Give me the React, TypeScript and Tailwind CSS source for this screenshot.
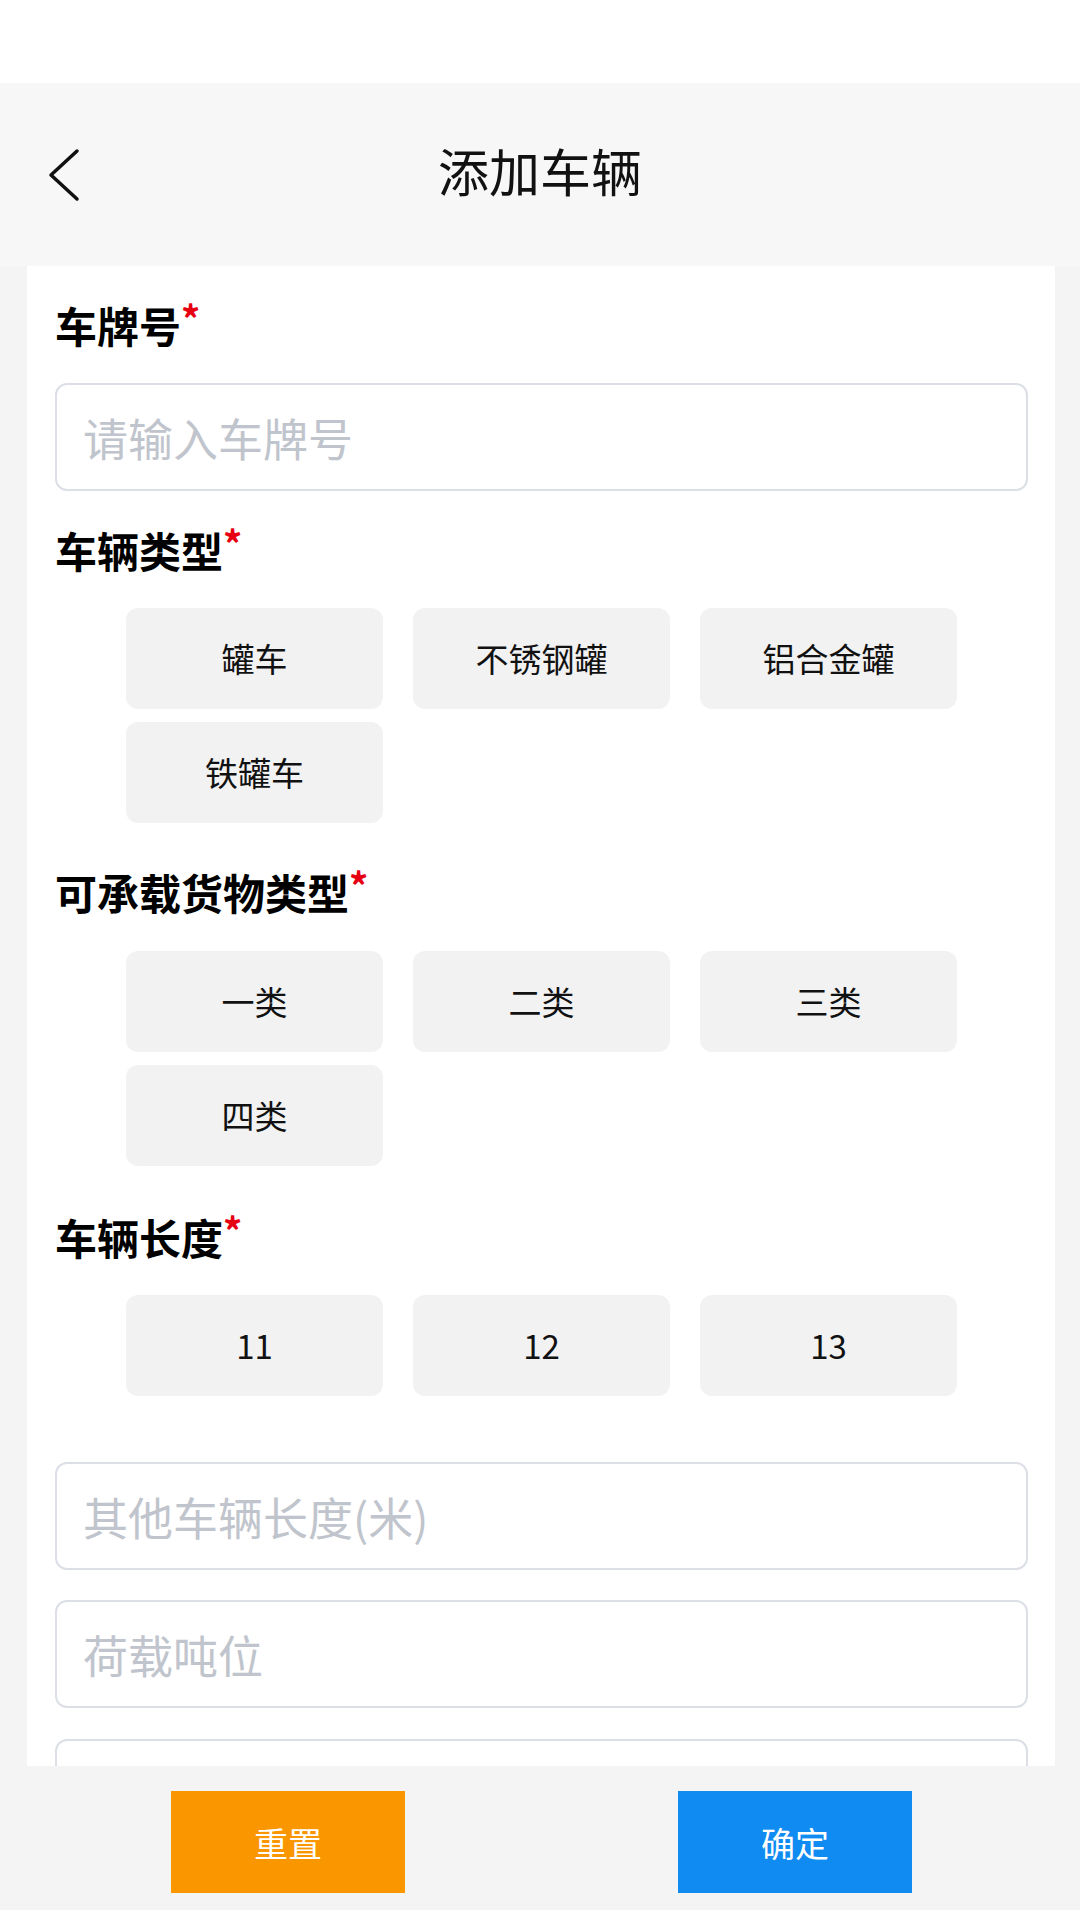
import { useState } from "react";

const vehicleTypes = ["罐车", "不锈钢罐", "铝合金罐", "铁罐车"];
const cargoTypes = ["一类", "二类", "三类", "四类"];
const lengths = ["11", "12", "13"];

function Label({ text, className = "" }: { text: string; className?: string }) {
  return (
    <div className={`flex h-[44px] items-start ${className}`}>
      <span className="text-[42px] font-bold leading-[44px] text-black">{text}</span>
      <span className="mt-[-4px] text-[38px] font-bold leading-none text-[#e60012]">*</span>
    </div>
  );
}

function Field({ placeholder, className = "" }: { placeholder: string; className?: string }) {
  return (
    <div className={`h-[108px] rounded-[12px] border-2 border-[#dcdfe6] px-[26px] ${className}`}>
      <input
        className="h-full w-full bg-transparent text-[45px] text-[#333] outline-none placeholder:text-[#c0c4cc]"
        placeholder={placeholder}
      />
    </div>
  );
}

function Options({ items, className = "" }: { items: string[]; className?: string }) {
  const [picked, setPicked] = useState<string | null>(null);
  return (
    <div className={`mx-auto grid w-[831px] grid-cols-3 gap-x-[30px] gap-y-[13px] ${className}`}>
      {items.map((item) => (
        <button
          key={item}
          onClick={() => setPicked(item)}
          className={`flex h-[101px] items-center justify-center rounded-[12px] text-[33px] ${
            picked === item ? "bg-[#e6f2fe] text-[#1089f0]" : "bg-[#f2f2f2] text-[#111]"
          }`}
        >
          {item}
        </button>
      ))}
    </div>
  );
}

export default function App() {
  return (
    <div
      className="flex h-[1920px] w-[1080px] flex-col overflow-hidden bg-[#f4f4f4]"
      style={{ fontFamily: '"Noto Sans CJK SC", "Noto Sans", sans-serif' }}
    >
      {/* status bar */}
      <div className="h-[83px] shrink-0 bg-white" />

      {/* header */}
      <header className="grid h-[183px] shrink-0 grid-cols-[1fr_auto_1fr] items-center bg-[#f7f7f7]">
        <button className="ml-[47px] flex h-[60px] w-[40px] items-center">
          <svg width="34" height="54" viewBox="0 0 34 54" fill="none">
            <path d="M30 3 L4 27 L30 51" stroke="#111" strokeWidth="3.5" strokeLinecap="round" strokeLinejoin="round" />
          </svg>
        </button>
        <h1 className="mt-[-8px] text-[51px] font-normal leading-none text-[#111]">添加车辆</h1>
        <div />
      </header>

      {/* form */}
      <main className="min-h-0 flex-1 overflow-hidden pl-[27px] pr-[25px]">
        <div className="bg-white pb-[40px] pl-[28px] pr-[27px] pt-[37px]">
          <Label text="车牌号" />
          <Field placeholder="请输入车牌号" className="mt-[36px]" />

          <Label text="车辆类型" className="mt-[37px]" />
          <Options items={vehicleTypes} className="mt-[36px]" />

          <Label text="可承载货物类型" className="mt-[47px]" />
          <Options items={cargoTypes} className="mt-[37px]" />

          <Label text="车辆长度" className="mt-[49px]" />
          <Options items={lengths} className="mt-[36px]" />

          <Field placeholder="其他车辆长度(米)" className="mt-[66px]" />
          <Field placeholder="荷载吨位" className="mt-[30px]" />
          <Field placeholder="" className="mt-[31px]" />
        </div>
      </main>

      {/* actions */}
      <div className="flex h-[144px] shrink-0 items-start justify-between bg-[#f4f4f4] pl-[171px] pr-[168px] pt-[25px]">
        <button className="h-[102px] w-[234px] bg-[#fa9600] text-[34px] text-white">重置</button>
        <button className="h-[102px] w-[234px] bg-[#0f8bf1] text-[34px] text-white">确定</button>
      </div>
      <div className="h-[10px] shrink-0 bg-white" />
    </div>
  );
}
